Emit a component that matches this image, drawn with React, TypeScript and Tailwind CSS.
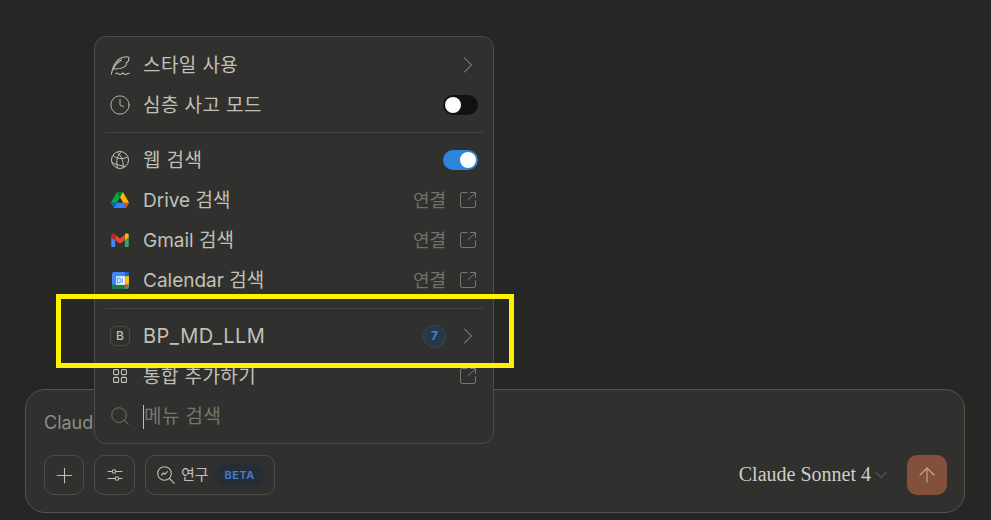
import { ChevronRight, ChevronDown, Clock, Search, Plus, ArrowUp, SquareArrowOutUpRight } from 'lucide-react';
import type { ReactNode } from 'react';

const KR = "font-['Inter','Noto_Sans_CJK_KR',sans-serif]";

function FeatherWave() {
  return (
    <svg width="21" height="21" viewBox="0 0 21 21" fill="none" stroke="#c2c0b6" strokeWidth="1.1" strokeLinecap="round" strokeLinejoin="round">
      <path d="M1.500 19.500C2 16 2.800 13 4.200 10.500C6 6.800 9.500 2.800 14 1.800C16.200 1.300 18.500 1.300 19.800 1.800C20.200 4.500 19.200 6.800 17 7.800C17.600 9 16.600 11.200 14.800 12.200C12.500 13.500 8.500 14.300 4 14.200" />
      <path d="M3.500 14C5 10.500 8 7 12 4.800" />
      <path d="M6 19.200C7 18.200 8 18.200 9 19.200C10 20.200 11 20.200 12 19.200C13 18.200 14 18.200 15 19.200C16 20.200 17 20.200 18 19.200C18.800 18.400 19.500 18.400 20.300 19" />
    </svg>
  );
}

function GlobeIcon() {
  return (
    <svg className="shrink-0" width="20" height="20" viewBox="0 0 20 20" fill="none" stroke="#c2c0b6" strokeWidth="1">
      <circle cx="10" cy="10" r="8.500" />
      <path d="M3 5.500C7 9 13 9.500 17.500 7" />
      <path d="M2 12.500C6 15 11 15.500 15.500 16.500" />
      <path d="M11.500 1.800C7.500 5 5.500 11 7.500 18" />
      <path d="M7 2.200C11 5.500 14 11 13 17.800" />
    </svg>
  );
}

function DriveIcon() {
  return (
    <svg className="shrink-0" width="18" height="16" viewBox="0 0 87.3 78">
      <path d="m6.600 66.850 3.850 6.650c.8 1.400 1.950 2.500 3.300 3.300l13.750-23.800h-27.500c0 1.550.4 3.100 1.200 4.500z" fill="#0066da" />
      <path d="m43.650 25-13.750-23.800c-1.350.8-2.500 1.900-3.300 3.300l-25.400 44a9.060 9.060 0 0 0-1.200 4.500h27.500z" fill="#00ac47" />
      <path d="m73.550 76.800c1.350-.8 2.500-1.900 3.300-3.300l1.600-2.750 7.650-13.250c.8-1.400 1.200-2.950 1.200-4.500h-27.500l5.850 11.500z" fill="#ea4335" />
      <path d="m43.650 25 13.750-23.800c-1.350-.8-2.900-1.200-4.500-1.200h-18.500c-1.600 0-3.150.45-4.500 1.200z" fill="#00832d" />
      <path d="m59.800 53h-32.300l-13.750 23.800c1.350.8 2.900 1.200 4.500 1.200h50.800c1.600 0 3.150-.45 4.500-1.200z" fill="#2684fc" />
      <path d="m73.400 26.500-12.700-22c-.8-1.400-1.950-2.500-3.300-3.300l-13.750 23.800 16.150 28h27.450c0-1.550-.4-3.100-1.200-4.500z" fill="#ffba00" />
    </svg>
  );
}

function GmailIcon() {
  return (
    <svg className="shrink-0" width="18" height="14" viewBox="0 0 20 16">
      <path d="M1.400 16H4.500V8.200L0 4.800V14.600C0 15.400.6 16 1.400 16Z" fill="#4285f4" />
      <path d="M15.500 16H18.600C19.400 16 20 15.400 20 14.600V4.800L15.500 8.200Z" fill="#34a853" />
      <path d="M15.500 2V8.200L20 4.800V2.400C20 .6 18-.4 16.600 .6Z" fill="#fbbc04" />
      <path d="M4.500 8.200V2L10 6.200 15.500 2V8.200L10 12.300Z" fill="#ea4335" />
      <path d="M0 2.400V4.800L4.500 8.200V2L3.400 .6C2-.4 0 .6 0 2.400Z" fill="#c5221f" />
    </svg>
  );
}

function CalendarIcon() {
  return (
    <svg className="shrink-0" width="17" height="17" viewBox="0 0 18 18">
      <rect x="0" y="0" width="18" height="18" rx="2" fill="#4285f4" />
      <path d="M13.500 0H16C17.100 0 18 .9 18 2V4.500H13.500Z" fill="#1967d2" />
      <rect x="13.500" y="4.500" width="4.500" height="9" fill="#fbbc04" />
      <path d="M4.500 13.500H13.500V18H2C.9 18 0 17.100 0 16V13.500Z" fill="#188038" />
      <path d="M13.500 13.500H18V15L15 18H13.500Z" fill="#34a853" />
      <path d="M13.500 13.500H18L13.500 18Z" fill="#ea4335" />
      <rect x="4.500" y="4.500" width="9" height="9" fill="#ffffff" />
      <rect x="6" y="6.500" width="2.600" height="5" fill="none" stroke="#4285f4" strokeWidth="1" />
      <path d="M10.800 6.500V11.500" stroke="#4285f4" strokeWidth="1.200" />
    </svg>
  );
}

function GridIcon() {
  return (
    <svg className="shrink-0" width="14" height="14" viewBox="0 0 14 14" fill="none" stroke="#c2c0b6" strokeWidth="1.100">
      <rect x="0.600" y="0.600" width="5" height="5" rx="1" />
      <rect x="8.400" y="0.600" width="5" height="5" rx="1" />
      <rect x="0.600" y="8.400" width="5" height="5" rx="1" />
      <rect x="8.400" y="8.400" width="5" height="5" rx="1" />
    </svg>
  );
}

function SlidersIcon() {
  return (
    <svg width="16" height="16" viewBox="0 0 16 16" fill="none" stroke="#c2c0b6" strokeWidth="1.100" strokeLinecap="round">
      <path d="M1 4.500H5M9 4.500H15" />
      <circle cx="7" cy="4.500" r="1.800" />
      <path d="M1 11.500H8M12 11.500H15" />
      <circle cx="10" cy="11.500" r="1.800" />
    </svg>
  );
}

function ResearchIcon() {
  return (
    <svg width="18" height="18" viewBox="0 0 18 18" fill="none" stroke="#c2c0b6" strokeWidth="1.100" strokeLinecap="round" strokeLinejoin="round">
      <circle cx="7.500" cy="7.500" r="6.800" />
      <path d="M12.500 12.500L17.300 17.300" />
      <path d="M4.500 9L6.500 7L8 8.200L10.500 5.500" />
    </svg>
  );
}

function ExternalIcon() {
  return <SquareArrowOutUpRight size={20} strokeWidth={1} className="shrink-0 text-[#87857f]" />;
}

function Connect() {
  return (
    <>
      <span className="text-[18px] text-[#73716b] mr-[12px]">연결</span>
      <ExternalIcon />
    </>
  );
}

function Arrow() {
  return <ChevronRight size={28} strokeWidth={0.9} className="shrink-0 text-[#87857f] mr-[-4px]" />;
}

function Row({ icon, label, right, labelClass, rowClass }: { icon: ReactNode; label: string; right?: ReactNode; labelClass?: string; rowClass?: string }) {
  return (
    <div className={`${rowClass ?? 'h-10'} flex items-center pl-[3px] pr-[5px]`}>
      <div className="w-[35px] pl-[2px] flex items-center">
        <div className="w-5 flex justify-center items-center">{icon}</div>
      </div>
      <span className={labelClass ?? 'mt-[2px] text-[19px] text-[#c2c0b6] tracking-[0.4px]'}>{label}</span>
      <div className="ml-auto flex items-center">{right}</div>
    </div>
  );
}

function Toggle({ on }: { on?: boolean }) {
  return (
    <div className={`w-[35px] h-5 rounded-full flex items-center px-[2px] ${on ? 'bg-[#2c84db] justify-end' : 'bg-[#111110] justify-start'}`}>
      <div className="w-4 h-4 rounded-full bg-white" />
    </div>
  );
}

const latinLabel = 'mt-[2px] text-[19px] text-[#c2c0b6]';

export default function App() {
  return (
    <div className={`relative w-[991px] h-[520px] overflow-hidden bg-[#262624] flex flex-col justify-end pl-[25px] pr-[26px] pb-[7px] ${KR}`}>
      {/* composer */}
      <div className="h-[124px] rounded-[20px] border border-[#55544f] bg-[#30302e] pl-[18px] pr-[17px] pt-[19px] pb-[17px] flex flex-col justify-between">
        <div className="text-[18px] leading-7 text-[#8f8d86]">Claude</div>
        <div className="flex items-center gap-[10px]">
          <button className="w-10 h-10 rounded-[10px] border border-[#4d4c48] flex items-center justify-center text-[#c2c0b6]">
            <Plus size={25} strokeWidth={1} />
          </button>
          <button className="w-[41px] h-10 rounded-[10px] border border-[#4d4c48] flex items-center justify-center">
            <SlidersIcon />
          </button>
          <button className="w-[130px] h-10 rounded-[10px] border border-[#4d4c48] flex items-center pl-[11px]">
            <ResearchIcon />
            <span className="ml-[6px] text-[15px] text-[#c2c0b6]">연구</span>
            <span className="ml-[6px] h-[22px] px-[10px] rounded-full bg-[#272d36] text-[11px] font-semibold tracking-[0.5px] text-[#3f82cf] flex items-center">BETA</span>
          </button>
          <div className="ml-auto flex items-center">
            <span className="mb-[3px] font-['Liberation_Serif',serif] text-[20px] text-[#d0cec4]">Claude Sonnet 4</span>
            <ChevronDown size={20} strokeWidth={0.9} className="text-[#87857f]" />
          </div>
          <button className="ml-[6px] w-10 h-10 rounded-[10px] bg-[#83503b] flex items-center justify-center text-[#c9a99b]">
            <ArrowUp size={24} strokeWidth={1.1} />
          </button>
        </div>
      </div>

      {/* menu popover */}
      <div className="absolute left-[94px] top-[36px] w-[400px] h-[408px] rounded-[12px] border border-[#4d4c48] bg-[#30302e] px-[10px] pt-[8px]">
        <Row icon={<FeatherWave />} label="스타일 사용" right={<Arrow />} />
        <Row icon={<Clock size={22} strokeWidth={1} className="shrink-0 text-[#c2c0b6]" />} label="심층 사고 모드" right={<Toggle />} />
        <div className="mt-[7px] mb-[7px] h-px bg-[#454440]" />
        <Row icon={<GlobeIcon />} label="웹 검색" right={<Toggle on />} />
        <Row icon={<DriveIcon />} label="Drive 검색" labelClass={latinLabel} right={<Connect />} />
        <Row icon={<GmailIcon />} label="Gmail 검색" labelClass={latinLabel} right={<Connect />} />
        <Row icon={<CalendarIcon />} label="Calendar 검색" labelClass={latinLabel} right={<Connect />} />
        <div className="mt-2 mb-[7px] h-px bg-[#454440]" />
        <Row
          icon={
            <div className="w-5 h-5 shrink-0 rounded-[6px] border border-[#4d4c48] flex items-center justify-center text-[12px] font-medium text-[#c2c0b6]">B</div>
          }
          label="BP_MD_LLM"
          labelClass="text-[20px] text-[#c2c0b6] tracking-[0.5px]"
          right={
            <>
              <div className="w-[23px] h-[23px] rounded-full bg-[#27384b] border border-[#3b4855] flex items-center justify-center text-[12px] font-bold text-[#3f82cf] mr-[8px]">7</div>
              <Arrow />
            </>
          }
        />
        <Row icon={<GridIcon />} label="통합 추가하기" right={<ExternalIcon />} />
        <Row
          rowClass="h-[39px]"
          icon={<Search size={22} strokeWidth={1} className="shrink-0 text-[#77756f]" />}
          label="메뉴 검색"
          labelClass="mt-[2px] text-[19px] text-[#77756f] tracking-[0.4px] border-l border-[#c2c0b6] leading-6"
        />
      </div>

      {/* highlight box */}
      <div className="absolute left-[56px] top-[294px] w-[458px] h-[74px] border-[5px] border-[#fff200]" />
    </div>
  );
}
